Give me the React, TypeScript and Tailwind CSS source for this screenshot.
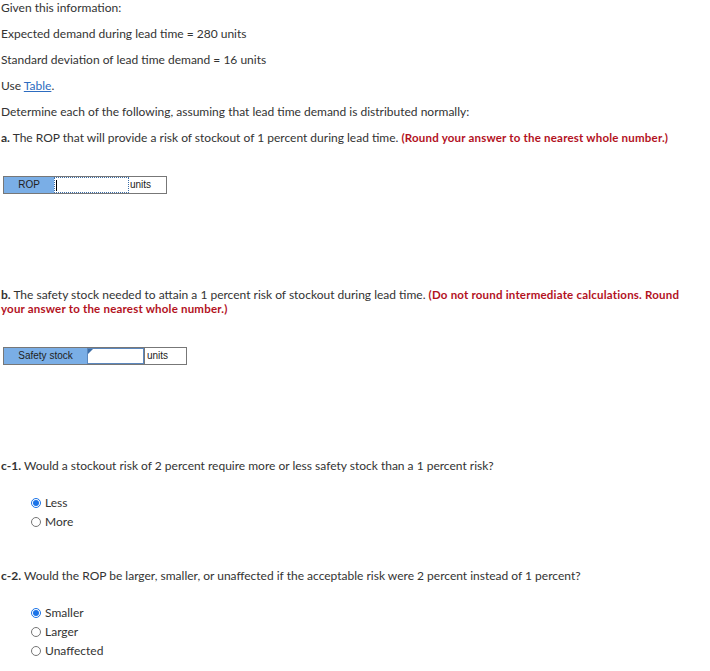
import React from 'react'

const font = { fontFamily: 'Lato, "Open Sans", sans-serif' }

function Radio({ checked, label }: { checked?: boolean; label: string }) {
  return (
    <div className="flex items-center h-[19px] gap-[4px]">
      {checked ? (
        <span className="w-[10px] h-[10px] rounded-full border border-[#1a73e8] flex items-center justify-center bg-white">
          <span className="w-[6px] h-[6px] rounded-full bg-[#1a73e8]" />
        </span>
      ) : (
        <span className="w-[10px] h-[10px] rounded-full border border-[#767676] bg-white" />
      )}
      <span>{label}</span>
    </div>
  )
}

function Red({ children }: { children: React.ReactNode }) {
  return <span className="font-bold text-[11.5px] tracking-[0.2px] text-[#b3121e]">{children}</span>
}

export default function App() {
  return (
    <div className="w-[710px] h-[671px] bg-white text-[#333] text-[12px] leading-[14px] px-[1px]" style={font}>
      <div className="pt-[1px]">Given this information:</div>
      <div className="mt-[12px]">Expected demand during lead time = 280 units</div>
      <div className="mt-[12px]">Standard deviation of lead time demand = 16 units</div>
      <div className="mt-[12px]">
        Use <span className="text-[#2d6cc0] underline">Table</span>.
      </div>
      <div className="mt-[12px]">Determine each of the following, assuming that lead time demand is distributed normally:</div>
      <div className="mt-[12px]">
        <b>a.</b> The ROP that will provide a risk of stockout of 1 percent during lead time.{' '}
        <Red>(Round your answer to the nearest whole number.)</Red>
      </div>

      <div
        className="mt-[31px] ml-[2px] flex w-[164px] h-[18px] border border-[#777] text-[10px] leading-[16px]"
        style={{ fontFamily: '"Liberation Sans", Arial, sans-serif' }}
      >
        <div className="w-[50px] bg-[#7aaee6] text-center text-[#222]">ROP</div>
        <div className="w-[75px] border border-dotted border-[#3c6ea8] bg-white relative">
          <span className="absolute left-[1px] top-[2px] w-[1px] h-[11px] bg-black" />
        </div>
        <div className="flex-1 bg-white pl-[1px] text-[#222]">units</div>
      </div>

      <div className="mt-[94px]">
        <b>b.</b> The safety stock needed to attain a 1 percent risk of stockout during lead time.{' '}
        <Red>
          (Do not round intermediate calculations. Round
          <br />
          your answer to the nearest whole number.)
        </Red>
      </div>

      <div
        className="mt-[31px] ml-[2px] flex w-[184px] h-[18px] border border-[#777] text-[10px] leading-[16px]"
        style={{ fontFamily: '"Liberation Sans", Arial, sans-serif' }}
      >
        <div className="w-[83px] bg-[#7aaee6] text-center text-[#222]">Safety stock</div>
        <div className="w-[57px] border border-[#5b87bd] bg-white relative">
          <span className="absolute left-0 top-0 w-0 h-0 border-t-[5px] border-r-[5px] border-t-[#3c6ea8] border-r-transparent" />
        </div>
        <div className="flex-1 bg-white pl-[2px] border-l border-[#777] text-[#222]">units</div>
      </div>

      <div className="mt-[94px]">
        <b>c-1.</b> Would a stockout risk of 2 percent require more or less safety stock than a 1 percent risk?
      </div>
      <div className="mt-[20px] ml-[30px]">
        <Radio checked label="Less" />
        <Radio label="More" />
      </div>

      <div className="mt-[38px]">
        <b>c-2.</b> Would the ROP be larger, smaller, or unaffected if the acceptable risk were 2 percent instead of 1 percent?
      </div>
      <div className="mt-[20px] ml-[30px]">
        <Radio checked label="Smaller" />
        <Radio label="Larger" />
        <Radio label="Unaffected" />
      </div>
    </div>
  )
}
